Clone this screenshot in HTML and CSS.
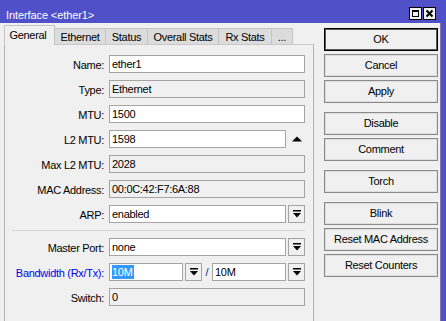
FILE: index.html
```html
<!DOCTYPE html>
<html>
<head>
<meta charset="utf-8">
<link rel="stylesheet" href="styles.css">
</head>
<body>
<div class="win">
  <div class="titlebar">
    <span class="title">Interface &lt;ether1&gt;</span>
    <div class="tbtns">
      <svg class="tbtn" width="13" height="13" viewBox="0 0 13 13"><rect x="0.5" y="0.5" width="12" height="12" fill="#f0f0f0" stroke="#000"/><rect x="3.5" y="3.5" width="6" height="6" fill="none" stroke="#000"/><rect x="3" y="3" width="7" height="2" fill="#000"/></svg>
      <svg class="tbtn" width="13" height="13" viewBox="0 0 13 13"><rect x="0.5" y="0.5" width="12" height="12" fill="#f0f0f0" stroke="#000"/><path d="M3.5 3.5 L9.5 9.5 M9.5 3.5 L3.5 9.5" stroke="#000" stroke-width="2"/></svg>
    </div>
  </div>
  <div class="client">
    <div class="left">
      <div class="tabs">
        <div class="tab sel t1">General</div>
        <div class="tab t2">Ethernet</div>
        <div class="tab t3">Status</div>
        <div class="tab t4">Overall Stats</div>
        <div class="tab t5">Rx Stats</div>
        <div class="tab t6">...</div>
      </div>
      <div class="panel">
        <div class="row"><span class="lbl">Name:</span><div class="field">ether1</div></div>
        <div class="row"><span class="lbl">Type:</span><div class="field ro">Ethernet</div></div>
        <div class="row"><span class="lbl">MTU:</span><div class="field">1500</div></div>
        <div class="row"><span class="lbl">L2 MTU:</span><div class="field short">1598</div><span class="updn"><svg width="10" height="6" viewBox="0 0 10 6"><polygon points="0,5.5 10,5.5 5,0.5" fill="#000"/></svg></span></div>
        <div class="row"><span class="lbl">Max L2 MTU:</span><div class="field ro">2028</div></div>
        <div class="row"><span class="lbl">MAC Address:</span><div class="field ro">00:0C:42:F7:6A:88</div></div>
        <div class="row"><span class="lbl">ARP:</span><div class="field short">enabled</div><span class="dd"><svg width="8" height="8" viewBox="0 0 8 8"><rect x="0" y="0" width="8" height="1.5" fill="#000"/><polygon points="0,3 8,3 4,7.5" fill="#000"/></svg></span></div>
        <div class="sep"></div>
        <div class="row"><span class="lbl">Master Port:</span><div class="field short">none</div><span class="dd"><svg width="8" height="8" viewBox="0 0 8 8"><rect x="0" y="0" width="8" height="1.5" fill="#000"/><polygon points="0,3 8,3 4,7.5" fill="#000"/></svg></span></div>
        <div class="row"><span class="lbl blue">Bandwidth (Rx/Tx):</span><div class="field half"><span class="hl">10M</span></div><span class="dd"><svg width="8" height="8" viewBox="0 0 8 8"><rect x="0" y="0" width="8" height="1.5" fill="#000"/><polygon points="0,3 8,3 4,7.5" fill="#000"/></svg></span><span class="slash">/</span><div class="field half">10M</div><span class="dd"><svg width="8" height="8" viewBox="0 0 8 8"><rect x="0" y="0" width="8" height="1.5" fill="#000"/><polygon points="0,3 8,3 4,7.5" fill="#000"/></svg></span></div>
        <div class="row"><span class="lbl">Switch:</span><div class="field ro">0</div></div>
      </div>
    </div>
    <div class="buttons">
      <div class="group">
        <div class="btn def">OK</div>
        <div class="btn">Cancel</div>
        <div class="btn">Apply</div>
      </div>
      <div class="group">
        <div class="btn">Disable</div>
        <div class="btn">Comment</div>
      </div>
      <div class="group">
        <div class="btn">Torch</div>
      </div>
      <div class="group">
        <div class="btn">Blink</div>
        <div class="btn">Reset MAC Address</div>
        <div class="btn">Reset Counters</div>
      </div>
    </div>
  </div>
</div>
</body>
</html>
```
FILE: styles.css
```css
html, body {
  margin: 0;
  padding: 0;
}
body {
  background: #5050c8;
  font-family: "Liberation Sans", Arial, sans-serif;
  font-size: 11px;
  letter-spacing: -0.3px;
  color: #000;
  width: 446px;
  height: 321px;
  overflow: hidden;
}
.win {
  display: flex;
  flex-direction: column;
  height: 321px;
}
.titlebar {
  height: 23px;
  flex: none;
  display: flex;
  justify-content: space-between;
  align-items: flex-start;
  padding: 0 10px 0 6px;
  color: #fff;
}
.title {
  font-size: 11px;
  letter-spacing: -0.1px;
  line-height: 15px;
  padding-top: 8px;
}
.tbtns {
  display: flex;
  gap: 1px;
  padding-top: 7px;
}
.tbtn {
  display: block;
}
.client {
  flex: 1;
  background: #f0f0f0;
  margin-right: 5px;
  border-right: 1px solid #7a7aa8;
  display: flex;
  padding: 2px 0 0 4px;
}
.left {
  width: 310px;
  flex: none;
  display: flex;
  flex-direction: column;
}
.tabs {
  display: flex;
  align-items: flex-end;
  height: 19px;
}
.tab {
  height: 16px;
  box-sizing: border-box;
  border: 1px solid #c4c4c4;
  border-bottom: none;
  border-left: none;
  background: #dcdcdc;
  line-height: 16px;
  text-align: center;
  white-space: nowrap;
}
.tab.sel {
  height: 20px;
  margin-bottom: -1px;
  border-left: 1px solid #c4c4c4;
  background: #f0f0f0;
  position: relative;
  z-index: 1;
  line-height: 18px;
  text-indent: -3px;
}
.t1 { width: 51px; }
.t2 { width: 51px; }
.t3 { width: 42px; }
.t4 { width: 71px; }
.t5 { width: 53px; }
.t6 { width: 21px; }
.panel {
  flex: 1;
  border: 1px solid #b4b4b4;
  border-top-color: #c8c8c8;
  border-bottom: none;
  padding-top: 10px;
}
.row {
  display: flex;
  align-items: flex-start;
  height: 18px;
  margin-bottom: 7px;
}
.lbl {
  width: 99px;
  margin-right: 5px;
  text-align: right;
  white-space: nowrap;
  line-height: 18px;
  padding-top: 1px;
}
.lbl.blue {
  color: #0000f0;
}
.field {
  width: 196px;
  height: 18px;
  box-sizing: border-box;
  border: 1px solid #a4a4a4;
  background: #fff;
  padding-left: 2px;
  line-height: 17px;
  white-space: nowrap;
  overflow: hidden;
}
.field.ro {
  background: #f0f0f0;
}
.field.short {
  width: 177px;
  margin-right: 2px;
}
.field.half {
  width: 74px;
  margin-right: 2px;
}
.hl {
  background: #3399ff;
  color: #fff;
  padding: 1px 1px 1px 0;
}
.dd {
  width: 17px;
  height: 18px;
  box-sizing: border-box;
  border: 1px solid #a4a4a4;
  background: #f0f0f0;
  display: flex;
  align-items: center;
  justify-content: center;
}
.updn {
  width: 17px;
  height: 18px;
  display: flex;
  align-items: center;
  justify-content: center;
}
.slash {
  width: 10px;
  text-align: center;
  line-height: 18px;
  color: #202080;
}
.sep {
  height: 1px;
  background: #d6d6d6;
  width: 293px;
  margin: 3px 0 7px 7px;
}
.buttons {
  margin-left: 10px;
  margin-top: 3px;
  width: 114px;
  display: flex;
  flex-direction: column;
  gap: 9px;
}
.group {
  display: flex;
  flex-direction: column;
  gap: 3px;
}
.btn {
  height: 23px;
  box-sizing: border-box;
  border: 1px solid #8a8a8a;
  box-shadow: inset 0 0 0 1px #dedede;
  background: #f0f0f0;
  text-align: center;
  line-height: 21px;
  white-space: nowrap;
}
.btn.def {
  border: 1px solid #000;
  box-shadow: inset 0 0 0 1px #5a5a5a;
}
```
